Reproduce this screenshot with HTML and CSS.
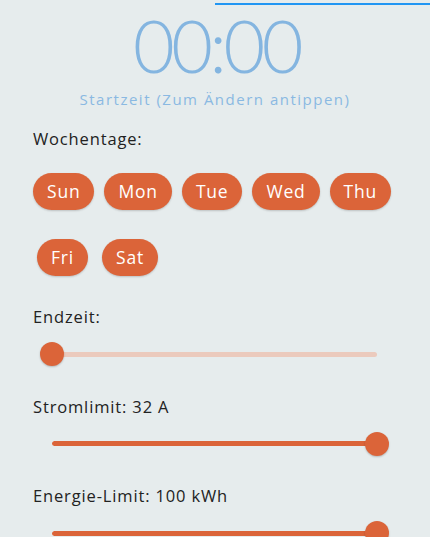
FILE: index.html
```html
<!DOCTYPE html>
<html lang="de">
<head>
<meta charset="utf-8">
<title>Zeitplan</title>
<link rel="stylesheet" href="styles.css">
</head>
<body>
<div class="tabbar"><div class="indicator"></div></div>
<main class="page">
  <div class="time">00:00</div>
  <div class="hint">Startzeit (Zum Ändern antippen)</div>

  <div class="label label-days">Wochentage:</div>
  <div class="chips">
    <div class="chip-row row1">
      <span class="chip">Sun</span>
      <span class="chip">Mon</span>
      <span class="chip">Tue</span>
      <span class="chip">Wed</span>
      <span class="chip">Thu</span>
    </div>
    <div class="chip-row row2">
      <span class="chip">Fri</span>
      <span class="chip">Sat</span>
    </div>
  </div>

  <div class="label">Endzeit:</div>
  <div class="slider">
    <div class="track"><div class="fill" style="width:0%"></div></div>
    <div class="thumb" style="left:0%"></div>
  </div>

  <div class="label">Stromlimit: 32 A</div>
  <div class="slider">
    <div class="track"><div class="fill" style="width:100%"></div></div>
    <div class="thumb" style="left:100%"></div>
  </div>

  <div class="label">Energie-Limit: 100 kWh</div>
  <div class="slider">
    <div class="track"><div class="fill" style="width:100%"></div></div>
    <div class="thumb" style="left:100%"></div>
  </div>
</main>
</body>
</html>
```

FILE: styles.css
```css
html, body {
  margin: 0;
  padding: 0;
  background: #e6eced;
  height: 100%;
  overflow: hidden;
}
body {
  font-family: "Open Sans", "Noto Sans", "DejaVu Sans", sans-serif;
  color: #222222;
}
.tabbar {
  height: 5px;
  display: flex;
  justify-content: flex-end;
  align-items: flex-end;
}
.indicator {
  width: 215px;
  height: 2.5px;
  background: #2196f3;
}
.page {
  padding: 0 0 0 33px;
}
.time {
  font-family: "Lato", "Roboto", sans-serif;
  font-weight: 300;
  font-size: 72px;
  line-height: 60px;
  margin-top: 10px;
  margin-left: -33px;
  padding-left: 3px;
  text-align: center;
  color: #84b5e0;
  letter-spacing: -3.5px;
}
.hint {
  margin-left: -33px;
  text-align: center;
  font-size: 15px;
  letter-spacing: 1.5px;
  line-height: 20px;
  color: #8ab9e2;
  margin-top: 14px;
}
.label {
  font-size: 16.5px;
  letter-spacing: 0.85px;
  line-height: 20px;
}
.label-days {
  margin-top: 20px;
}
.chips {
  display: flex;
  flex-direction: column;
  gap: 29px;
  margin-top: 24px;
  margin-bottom: 31px;
}
.chip-row {
  display: flex;
  gap: 10px;
}
.row2 {
  padding-left: 4px;
  gap: 14px;
}
.chip {
  height: 37px;
  line-height: 37px;
  padding: 0 14px;
  border-radius: 19px;
  background: #db6439;
  color: #ffffff;
  font-size: 17.5px;
  letter-spacing: 0.8px;
  box-shadow: 0 1px 2px rgba(0, 0, 0, 0.18);
}
.slider {
  position: relative;
  margin: 15px 0 30.5px 19px;
  width: 325px;
  height: 24px;
  display: flex;
  align-items: center;
}
.track {
  width: 100%;
  height: 5px;
  border-radius: 3px;
  background: #ebcabd;
  overflow: hidden;
}
.fill {
  height: 100%;
  background: #db6439;
  border-radius: 3px;
}
.thumb {
  position: absolute;
  top: 0;
  width: 24px;
  height: 24px;
  margin-left: -12px;
  border-radius: 50%;
  background: #db6439;
  box-shadow: 0 1px 2px rgba(0, 0, 0, 0.22);
}
```
